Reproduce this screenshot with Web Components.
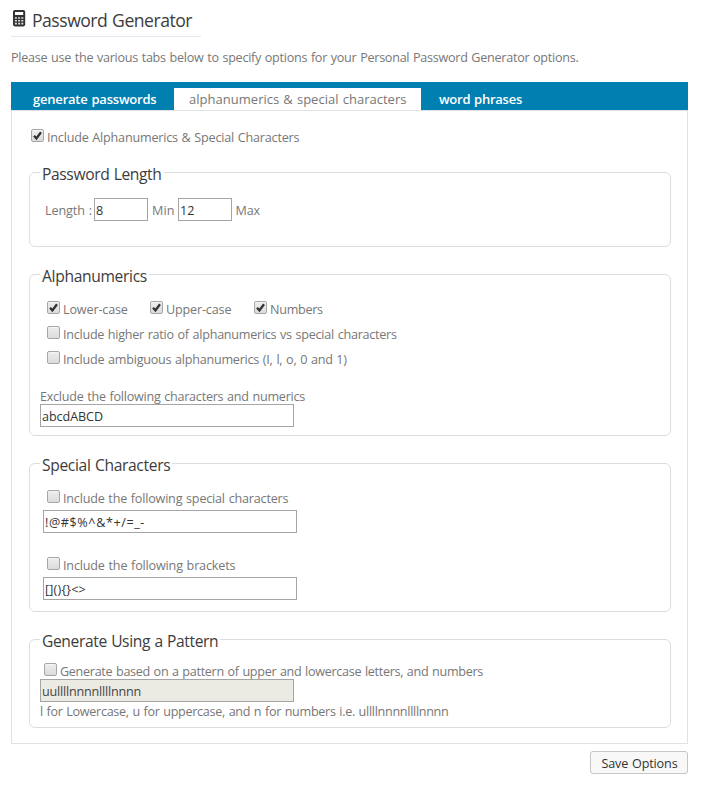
<!DOCTYPE html>
<html lang="en">
<head>
<meta charset="utf-8">
<title>Password Generator</title>
<style>
body{margin:0;background:#fff;color:#777;font:12.6px/18px "Open Sans","Noto Sans",sans-serif}
</style>
</head>
<body>
<password-page></password-page>
<script>
const define=(name,html,ready)=>customElements.define(name,class extends HTMLElement{
  connectedCallback(){
    if(!this.shadowRoot){
      const t=document.createElement('template');
      t.innerHTML=html;
      this.attachShadow({mode:'open'}).append(t.content.cloneNode(true));
    }
    if(ready)ready(this,this.shadowRoot);
  }
});

/* Text run tracked to an even measure given by its w attribute. */
define('fit-text',`<style>:host{display:block;white-space:pre;width:max-content;flex:none;word-spacing:.7px;padding-top:1px;margin-bottom:-1px}</style><slot></slot>`,el=>{
  const w=parseFloat(el.getAttribute('w')),n=el.textContent.length;
  el.style.letterSpacing='0px';
  el.style.letterSpacing=((w-el.getBoundingClientRect().width)/n).toFixed(3)+'px';
});

define('check-box',`<style>
:host{display:flex;height:18px;gap:3px;flex:none}
i{box-sizing:border-box;width:13px;height:13px;margin:1px .5px 0 -.5px;flex:none;border:1px solid #a6a6a6;border-radius:2px;background:linear-gradient(#ededed,#dcdcdc);box-shadow:inset 0 1px 0 #f5f5f5}
svg{display:none;width:11px;height:11px}
:host([checked]) svg{display:block}
</style><i><svg viewBox="0 0 11 11"><path d="M2 5.8 4.4 8.4 9 2.2" fill="none" stroke="#333" stroke-width="2.3"/></svg></i><slot></slot>`);

define('text-field',`<style>
:host{display:flex;box-sizing:border-box;width:254px;height:23px;border:1px solid #a5a5a5;padding:2px 1px 0;color:#333;background:#fff;flex:none}
:host([small]){width:54px}
:host([off]){background:#ebebe4;color:#444}
</style><slot></slot>`);

define('option-group',`<style>
:host{display:block;box-sizing:border-box;width:642px;border:1px solid #dcdddd;border-radius:6px}
header{display:block;width:max-content;height:22px;margin:-11px 0 0 10px;padding:0 2px;background:#fff;color:#3c3c3c;font-size:15.6px;line-height:22px}
</style><header><slot name="legend"></slot></header><slot></slot>`);

define('tab-bar',`<style>
:host{display:flex;box-sizing:border-box;height:28px;padding:6px 0 0 7px;background:#0080b0}
</style><slot></slot>`);

define('tab-item',`<style>
:host{display:block;height:22px;box-sizing:border-box;padding:1px 15px 0;color:#fff;font-size:13px;font-weight:550;flex:none}
:host([active]){background:#fff;color:#777;width:247px;font-weight:400}
</style><slot></slot>`);

define('calc-icon',`<style>:host{display:block;width:13px;height:17px;flex:none}svg{display:block}</style>
<svg width="13" height="17" viewBox="0 0 13 17"><rect x="0" y="0" width="12.2" height="16.4" rx="1.8" fill="#333"/><path fill="#fff" d="M2 2h8.2v3H2z"/><path fill="#ddd" d="M1.9 7.2h2v1.6h-2zM5.1 7.2h2v1.6h-2zM8.3 7.2h2v1.6h-2zM1.9 10h2v1.6h-2zM5.1 10h2v1.6h-2zM8.3 10h2v1.6h-2zM1.9 12.8h2v1.6h-2zM5.1 12.8h2v1.6h-2zM8.3 12.8h2v1.6h-2z"/></svg>`);

define('push-button',`<style>
:host{display:block;box-sizing:border-box;width:98px;height:23px;padding:2px 0 0 10.5px;border:1px solid #c6c6c6;border-radius:3px;background:#f8f8f8;color:#333}
</style><slot></slot>`);

define('password-page',`<style>
:host{display:block;box-sizing:border-box;width:702px;height:788px;padding:6px 14px 0 11px}
h1{display:flex;gap:6px;box-sizing:border-box;width:190px;height:31px;margin:0;padding-left:2px;border-bottom:1px solid #e6e6f0;color:#3c3c3c;font-size:17.6px;line-height:26px;font-weight:400}
calc-icon{margin-top:4px}
.panel{box-sizing:border-box;width:677px;height:634px;border:1px solid #dde2e2;padding:17px 0 0 17px}
.row{display:flex;height:18px}
push-button{margin:7px 0 0 579px}
</style>
<h1><calc-icon></calc-icon><fit-text w="160">Password Generator</fit-text></h1>
<fit-text style="margin:11px 0 15px" w="567.5">Please use the various tabs below to specify options for your Personal Password Generator options.</fit-text>
<tab-bar style="width:677px"><tab-item style="width:156px"><fit-text w="123.5">generate passwords</fit-text></tab-item><tab-item active><fit-text w="217.5">alphanumerics &amp; special characters</fit-text></tab-item><tab-item style="padding-left:18px"><fit-text w="83">word phrases</fit-text></tab-item></tab-bar>
<div class="panel">
<check-box checked style="margin-left:2px"><fit-text w="252.3">Include Alphanumerics &amp; Special Characters</fit-text></check-box>
<option-group style="height:75px;margin-top:26px"><fit-text slot="legend" w="119.5">Password Length</fit-text>
<div class="row" style="margin:17px 0 0 15px"><fit-text w="47">Length :</fit-text><text-field small style="margin:-3px 4px 0 2px"><fit-text w="8">8</fit-text></text-field><fit-text w="22.5">Min</fit-text><text-field small style="margin:-3px 3.5px 0 3.5px"><fit-text w="14.5">12</fit-text></text-field><fit-text w="24.5">Max</fit-text></div>
</option-group>
<option-group style="height:162px;margin-top:27px"><fit-text slot="legend" w="105">Alphanumerics</fit-text>
<div class="row" style="margin:14px 0 0 17px"><check-box checked style="width:103px"><fit-text w="64.8">Lower-case</fit-text></check-box><check-box checked style="width:104px"><fit-text w="65.3">Upper-case</fit-text></check-box><check-box checked><fit-text w="52.8">Numbers</fit-text></check-box></div>
<check-box style="margin:7px 0 0 17px"><fit-text w="333.7">Include higher ratio of alphanumerics vs special characters</fit-text></check-box>
<check-box style="margin:7px 0 0 17px"><fit-text w="283.8">Include ambiguous alphanumerics (I, l, o, 0 and 1)</fit-text></check-box>
<fit-text w="265" style="margin:19px 0 -1px 10px">Exclude the following characters and numerics</fit-text>
<text-field style="margin:-2px 0 0 10px"><fit-text w="61">abcdABCD</fit-text></text-field>
</option-group>
<option-group style="height:149px;margin-top:27px"><fit-text slot="legend" w="128.3">Special Characters</fit-text>
<check-box style="margin:14px 0 0 17px"><fit-text w="225.3">Include the following special characters</fit-text></check-box>
<text-field style="margin:3px 0 0 13px"><fit-text w="100">!@#$%^&amp;*+/=_-</fit-text></text-field>
<check-box style="margin:23px 0 0 17px"><fit-text w="172.3">Include the following brackets</fit-text></check-box>
<text-field style="margin:3px 0 0 13px"><fit-text w="41">[](){}&lt;&gt;</fit-text></text-field>
</option-group>
<option-group style="height:89px;margin-top:27px"><fit-text slot="legend" w="176.3">Generate Using a Pattern</fit-text>
<check-box style="margin:11px 0 0 14px"><fit-text w="423">Generate based on a pattern of upper and lowercase letters, and numbers</fit-text></check-box>
<text-field off style="margin:-1px 0 0 10px"><fit-text w="99">uullllnnnnllllnnnn</fit-text></text-field>
<fit-text w="408.5" style="margin:0 0 0 10px">l for Lowercase, u for uppercase, and n for numbers i.e. ullllnnnnllllnnnn</fit-text>
</option-group>
</div>
<push-button><fit-text w="76">Save Options</fit-text></push-button>`);
</script>
</body>
</html>
